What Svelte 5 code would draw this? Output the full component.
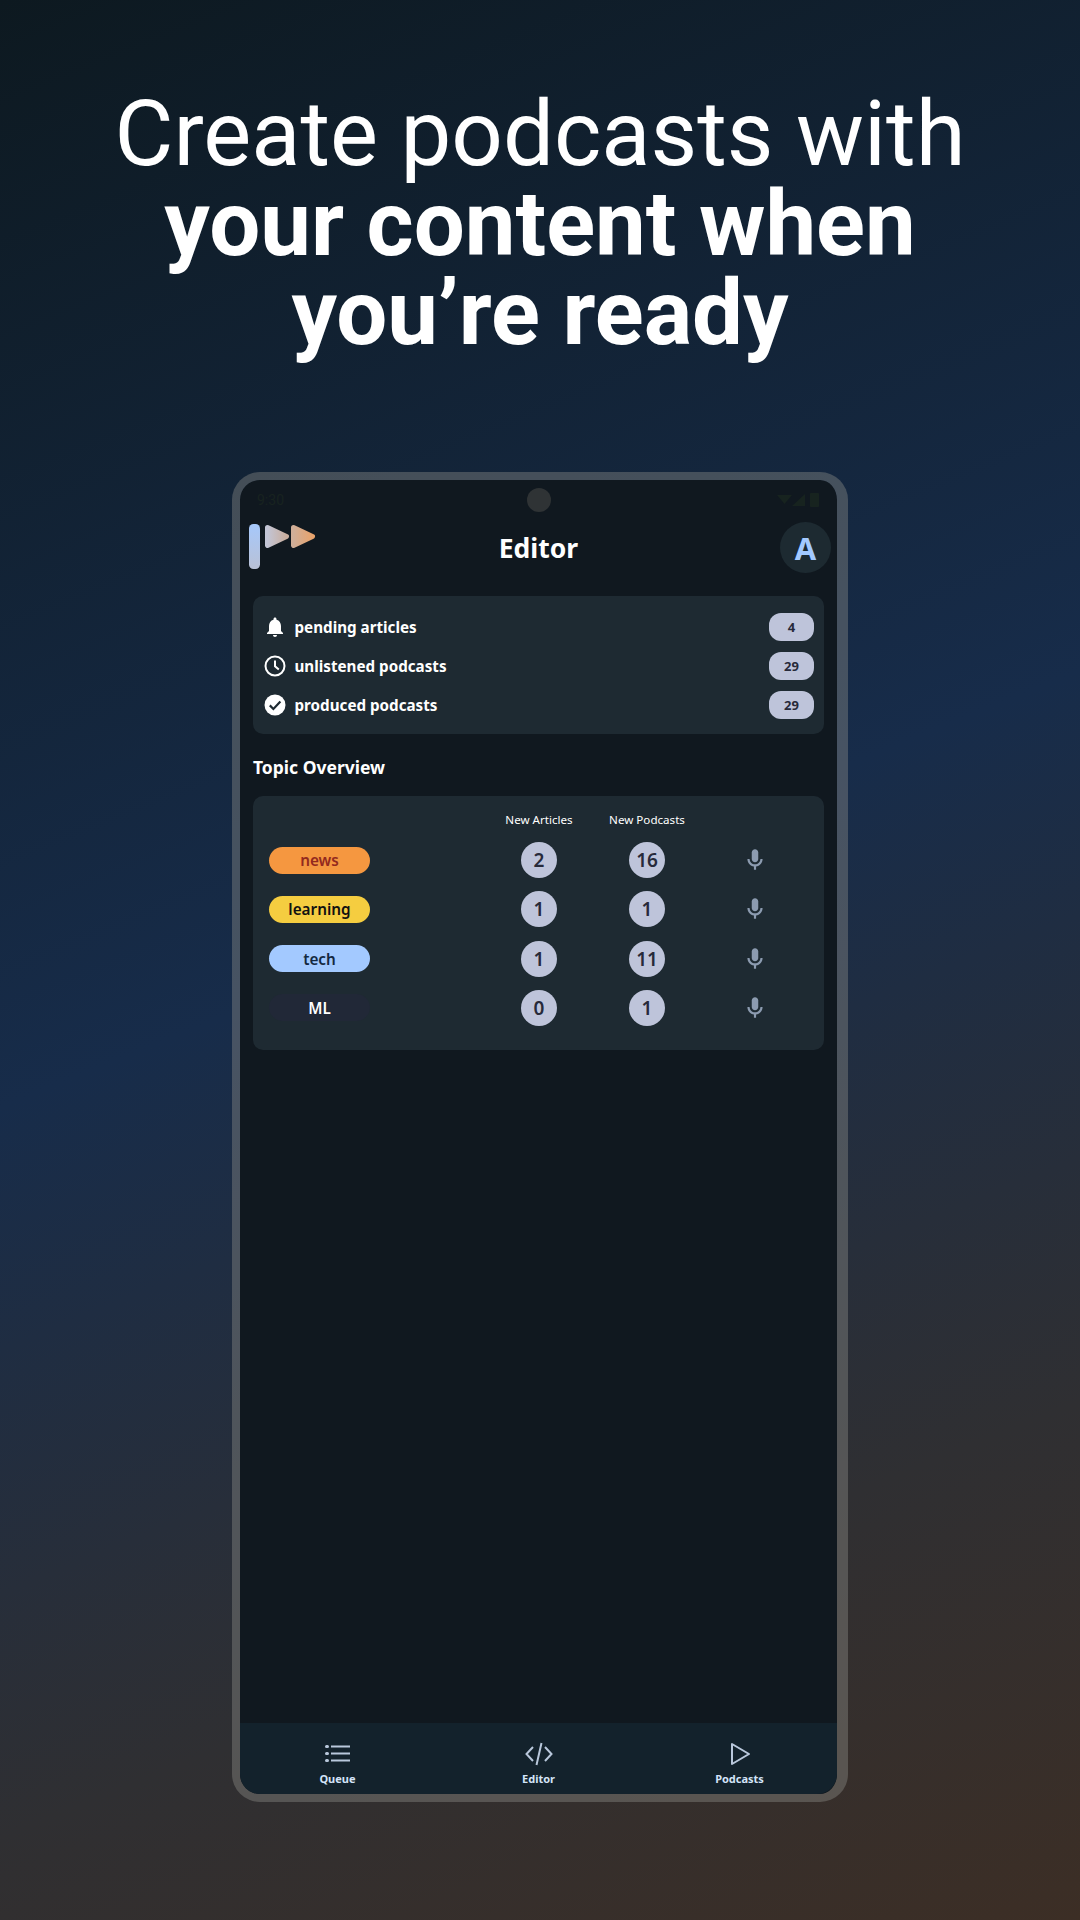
<script>
  const stats = [
    { icon: 'bell', label: 'pending articles', value: 4 },
    { icon: 'clock', label: 'unlistened podcasts', value: 29 },
    { icon: 'check', label: 'produced podcasts', value: 29 }
  ];
  const topics = [
    { name: 'news', cls: 'news', a: 2, p: 16 },
    { name: 'learning', cls: 'learning', a: 1, p: 1 },
    { name: 'tech', cls: 'tech', a: 1, p: 11 },
    { name: 'ML', cls: 'ml', a: 0, p: 1 }
  ];
</script>

<div class="page">
  <h1 class="hero">Create podcasts with<br /><strong>your content when<br />you’re ready</strong></h1>

  <div class="phone">
    <div class="screen">
      <div class="status">
        <span class="time">9:30</span>
        <span class="camera"></span>
        <svg class="sysicons" width="42" height="14" viewBox="0 0 42 14" fill="#17231f">
          <path d="M0 2h15L7.500 11z" /><path d="M15 13L28 1v12z" /><rect x="33" y="0" width="9" height="14" rx="1" />
        </svg>
      </div>

      <header class="topbar">
        <svg class="logo" width="68" height="46" viewBox="0 0 68 46">
          <defs>
            <linearGradient id="bar" x1="0" x2="0" y1="0" y2="1">
              <stop offset="0" stop-color="#a6c8fb" />
              <stop offset="1" stop-color="#b9c1d6" />
            </linearGradient>
            <linearGradient id="t1" x1="0" x2="1" y1="0" y2="0">
              <stop offset="0" stop-color="#c3c5d5" />
              <stop offset="1" stop-color="#c9ae9e" />
            </linearGradient>
            <linearGradient id="t2" x1="0" x2="1" y1="0" y2="0">
              <stop offset="0" stop-color="#d0ae98" />
              <stop offset="1" stop-color="#e8a36c" />
            </linearGradient>
          </defs>
          <rect x="0" y="0" width="11" height="45" rx="4.500" fill="url(#bar)" />
          <path d="M18.500 3.500 L37.500 12.500 L18.500 21.500 Z" fill="url(#t1)" stroke="url(#t1)" stroke-width="5" stroke-linejoin="round" />
          <path d="M44.500 3.500 L63.500 12.500 L44.500 21.500 Z" fill="url(#t2)" stroke="url(#t2)" stroke-width="5" stroke-linejoin="round" />
        </svg>
        <span class="title">Editor</span>
        <span class="avatar">A</span>
      </header>

      <main class="content">
        <section class="card stats">
          {#each stats as s}
            <div class="stat">
              <span class="stat-icon">
                {#if s.icon === 'bell'}
                  <svg width="26" height="26" viewBox="0 0 24 24" fill="#fff"><path d="M12 22c1.100 0 2-.9 2-2h-4c0 1.100.9 2 2 2zm6-6v-5c0-3.070-1.630-5.640-4.500-6.320V4c0-.83-.67-1.500-1.500-1.500s-1.500.67-1.500 1.500v.68C7.640 5.360 6 7.920 6 11v5l-2 2v1h16v-1l-2-2z" /></svg>
                {:else if s.icon === 'clock'}
                  <svg width="24" height="24" viewBox="0 0 24 24" fill="none" stroke="#fff" stroke-width="2"><circle cx="12" cy="12" r="9.500" /><path d="M12 6.500V12.300L15.800 15.600" /></svg>
                {:else}
                  <svg width="24" height="24" viewBox="0 0 24 24"><circle cx="12" cy="12" r="10.500" fill="#fff" /><path d="M6.800 12.400l3.600 3.600 7-7.400" fill="none" stroke="#1e2a32" stroke-width="2.200" /></svg>
                {/if}
              </span>
              <span class="stat-label">{s.label}</span>
              <span class="stat-badge">{s.value}</span>
            </div>
          {/each}
        </section>

        <h2 class="section-title">Topic Overview</h2>

        <section class="card topics">
          <div class="cell"></div>
          <div class="cell head">New Articles</div>
          <div class="cell head">New Podcasts</div>
          <div class="cell"></div>
          {#each topics as t}
            <div class="cell pillcell"><span class="pill {t.cls}">{t.name}</span></div>
            <div class="cell"><span class="count">{t.a}</span></div>
            <div class="cell"><span class="count">{t.p}</span></div>
            <div class="cell">
              <svg width="26" height="26" viewBox="0 0 24 24" fill="#8c9bb0"><path d="M12 14c1.660 0 3-1.340 3-3V5c0-1.660-1.340-3-3-3S9 3.340 9 5v6c0 1.660 1.340 3 3 3z" /><path d="M17 11c0 2.760-2.240 5-5 5s-5-2.240-5-5H5c0 3.530 2.610 6.430 6 6.920V21h2v-3.080c3.390-.49 6-3.390 6-6.920h-2z" /></svg>
            </div>
          {/each}
        </section>
      </main>

      <nav class="nav">
        <div class="nav-item">
          <svg width="26" height="24" viewBox="0 0 26 24" fill="none" stroke="#b9c8dc" stroke-width="2"><path d="M6 4.500h19M6 11.500h19M6 18.500h19" /><path d="M1.500 4.500h1M1.500 11.500h1M1.500 18.500h1" stroke-width="3" stroke-linecap="round" /></svg>
          <span>Queue</span>
        </div>
        <div class="nav-item">
          <svg width="28" height="24" viewBox="0 0 28 24" fill="none" stroke="#b9c8dc" stroke-width="2"><path d="M8 5L1.500 12 8 19M20 5l6.500 7L20 19M16.500 1L11.500 23" /></svg>
          <span>Editor</span>
        </div>
        <div class="nav-item">
          <svg width="28" height="24" viewBox="0 0 28 24" fill="none" stroke="#b9c8dc" stroke-width="2" stroke-linejoin="round"><path d="M6 2v20l17-10z" /></svg>
          <span>Podcasts</span>
        </div>
      </nav>
    </div>
  </div>
</div>

<style>
  :global(body) {
    margin: 0;
  }
  .page {
    width: 1080px;
    height: 1920px;
    overflow: hidden;
    box-sizing: border-box;
    padding-top: 90px;
    background: linear-gradient(158deg, #0d1920 0%, #172c4a 47%, #2f2f32 78%, #3c2e25 100%);
    display: flex;
    flex-direction: column;
    align-items: center;
  }
  .hero {
    margin: 0;
    font-family: Roboto, sans-serif;
    font-size: 90.500px;
    line-height: 89.500px;
    font-weight: 400;
    color: #fff;
    text-align: center;
    white-space: nowrap;
  }
  .hero strong {
    font-weight: 700;
  }
  .phone {
    margin-top: 113.500px;
    width: 616px;
    height: 1330px;
    box-sizing: border-box;
    border-style: solid;
    border-width: 8px 11px 8px 8px;
    border-color: rgba(142, 142, 135, 0.41);
    border-radius: 28px;
    background: #10181f;
    background-clip: padding-box;
  }
  .screen {
    height: 100%;
    display: flex;
    flex-direction: column;
    font-family: "Noto Sans", sans-serif;
    color: #fff;
    border-radius: 20px;
    overflow: hidden;
  }
  .status {
    height: 40px;
    flex: none;
    display: flex;
    align-items: center;
    justify-content: space-between;
    padding: 0 18px 0 17px;
    position: relative;
  }
  .time {
    font-family: Roboto, sans-serif;
    font-size: 14px;
    color: #18231f;
  }
  .camera {
    position: absolute;
    left: 50%;
    top: 8px;
    width: 24px;
    height: 24px;
    margin-left: -12px;
    border-radius: 50%;
    background: #2f3335;
  }
  .topbar {
    height: 52px;
    flex: none;
    display: flex;
    align-items: flex-start;
    justify-content: space-between;
    padding: 4px 6px 0 9px;
    position: relative;
  }
  .title {
    position: absolute;
    left: 0;
    right: 0;
    top: 10px;
    text-align: center;
    font-size: 26.500px;
    line-height: 36px;
    font-weight: 700;
  }
  .avatar {
    width: 51px;
    height: 51px;
    margin-top: -2px;
    border-radius: 50%;
    background: #1d2a31;
    color: #a3c9ff;
    font-weight: 700;
    font-size: 31px;
    display: flex;
    align-items: center;
    justify-content: center;
  }
  .content {
    flex: 1;
    padding: 20px 13px 0;
    display: flex;
    flex-direction: column;
  }
  .card {
    background: #1e2a32;
    border-radius: 10px;
  }
  .stats {
    padding: 11px 10px 10px 10px;
  }
  .stat {
    height: 39px;
    display: flex;
    align-items: center;
  }
  .stat-icon {
    width: 24px;
    height: 24px;
    display: flex;
    align-items: center;
    justify-content: center;
    margin-right: 7.500px;
  }
  .stat-label {
    flex: 1;
    font-size: 15.200px;
    font-weight: 700;
  }
  .stat-badge {
    width: 45px;
    height: 28px;
    border-radius: 12px;
    background: #bec4da;
    color: #272a3a;
    font-size: 13px;
    font-weight: 700;
    display: flex;
    align-items: center;
    justify-content: center;
  }
  .section-title {
    margin: 22px 0 17px;
    font-size: 17.500px;
    line-height: 23px;
    font-weight: 700;
  }
  .topics {
    padding: 8px 16px 17px;
    display: grid;
    grid-template-columns: 216px 108px 108px 108px;
    grid-template-rows: 31.400px;
    grid-auto-rows: 49.300px;
  }
  .topics .cell {
    display: flex;
    align-items: center;
    justify-content: center;
  }
  .topics .head {
    font-size: 11.600px;
    white-space: nowrap;
  }
  .topics .pillcell {
    justify-content: flex-start;
  }
  .pill {
    width: 101px;
    height: 27px;
    border-radius: 14px;
    font-size: 15.300px;
    font-weight: 600;
    display: flex;
    align-items: center;
    justify-content: center;
  }
  .news { background: #f59740; color: #93291e; }
  .learning { background: #f5cd40; color: #111; }
  .tech { background: #a3c9ff; color: #13283f; }
  .ml { background: #212837; color: #fff; }
  .count {
    width: 36px;
    height: 36px;
    border-radius: 50%;
    background: #bec4da;
    color: #272a3a;
    font-size: 19px;
    font-weight: 600;
    display: flex;
    align-items: center;
    justify-content: center;
  }
  .nav {
    height: 71px;
    flex: none;
    background: #13222c;
    display: grid;
    grid-template-columns: repeat(3, 201px);
    justify-content: center;
  }
  .nav-item {
    display: flex;
    flex-direction: column;
    align-items: center;
    padding-top: 19px;
    color: #d3e4f8;
    font-size: 11px;
    font-weight: 700;
  }
  .nav-item span {
    margin-top: 5px;
  }
</style>
